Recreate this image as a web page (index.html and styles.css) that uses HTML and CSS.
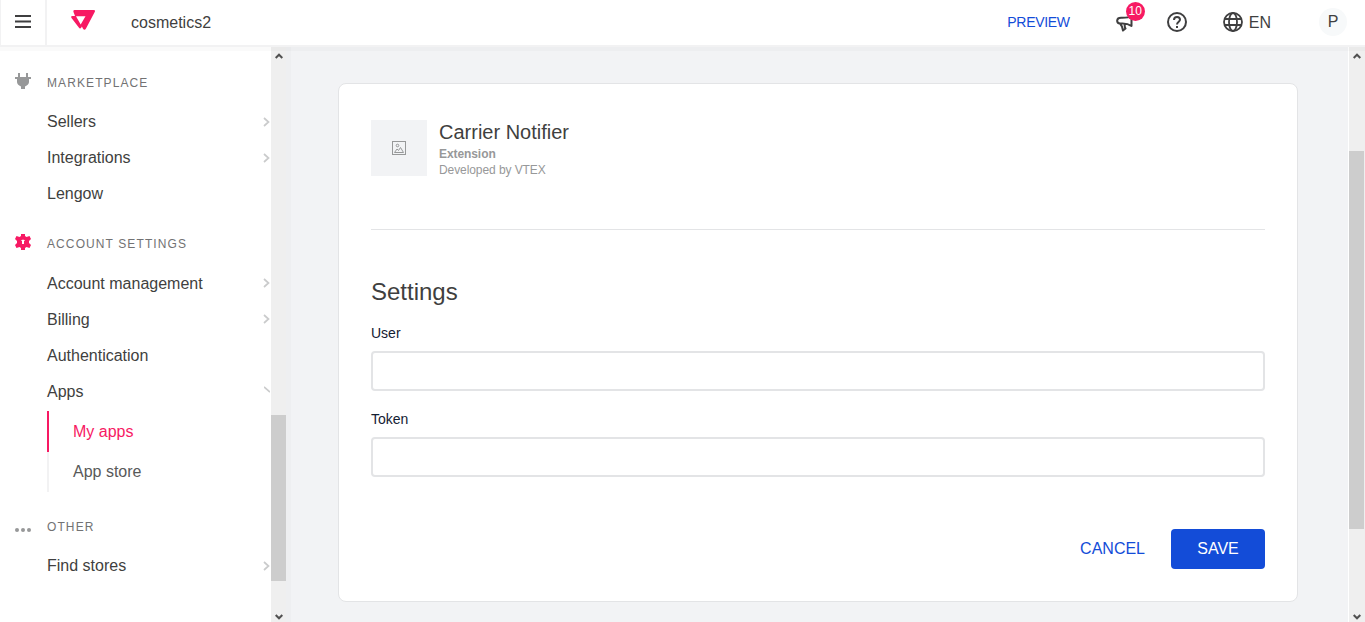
FILE: index.html
```html
<!DOCTYPE html>
<html lang="en">
<head>
<meta charset="utf-8">
<title>Carrier Notifier</title>
<link rel="stylesheet" href="styles.css">
</head>
<body>
<header class="topbar">
  <button class="menu-btn" aria-label="Menu"><svg width="16" height="13" viewBox="0 0 16 13"><path d="M0 1h16M0 6.500h16M0 12h16" stroke="#3f3f40" stroke-width="2"/></svg></button>
  <svg class="logo" width="24" height="20" viewBox="0 0 24 20"><path fill="#f71963" fill-rule="evenodd" d="M3.500 0H22.500Q24.800 0 23.700 2L15 18.600Q13.500 21 12 18.700L10.900 16.500L10.200 17.700Q9 19.300 7.800 17.500L.5 8Q-.6 6 1.500 6H4L2.500 2Q2 0 3.500 0ZM5 6.200H14.500L9.700 14.500Z"/></svg>
  <span class="account">cosmetics2</span>
  <a class="preview">PREVIEW</a>
  <div class="news">
    <svg width="19" height="19" viewBox="0 0 19 19" fill="none" stroke="#3f3f40" stroke-width="2" stroke-linejoin="round"><path d="M15.500 2C12.500 4 9 3.800 5 3.800C.2 3.800 0 8.800 4 9.500C8 9.500 11 8.800 15.500 12ZM4 9.500C6 11.500 6.500 13.500 7 16.500L9.500 14.500C8.500 13 8.500 11.500 9 10M15.500 2V12"/></svg>
    <span class="badge">10</span>
  </div>
  <svg class="help" width="20" height="20" viewBox="0 0 20 20" fill="none" stroke="#3f3f40" stroke-width="2"><circle cx="10" cy="10" r="9"/><path d="M7 8Q7 5 10 5T13 7.800C13 9.700 10 9.800 10 12.500M10 14V16"/></svg>
  <div class="lang"><svg width="20" height="20" viewBox="0 0 20 20" fill="none" stroke="#3f3f40" stroke-width="1.800"><circle cx="10" cy="10" r="9"/><ellipse cx="10" cy="10" rx="4" ry="9"/><path d="M2 7H18M2 13H18"/></svg><span>EN</span></div>
  <span class="avatar">P</span>
</header>
<div class="shell">
  <nav class="sidebar">
    <div class="nav">
      <div class="group-head"><svg width="16" height="16" viewBox="0 0 16 16"><path fill="#979899" d="M3 0H5V4H11V0H13V4H16V6H14V9Q14 11.500 10 13.500V16H6V13.500Q2 11.500 2 9V6H0V4H3Z"/></svg><span>MARKETPLACE</span></div>
      <div class="items">
        <a class="item">Sellers<svg class="chev" width="7" height="10" viewBox="0 0 7 10"><path d="M1 1L5.500 5L1 9"/></svg></a>
        <a class="item">Integrations<svg class="chev" width="7" height="10" viewBox="0 0 7 10"><path d="M1 1L5.500 5L1 9"/></svg></a>
        <a class="item">Lengow</a>
      </div>
      <div class="group-head active"><svg width="16" height="16" viewBox="0 0 16 16"><path fill="#f71963" fill-rule="evenodd" d="M6 0H10V2L11.500 3L14.500 2L16 5L14 7V9L16 11L14.500 14L11.500 13L10 14V16H6V14L4.500 13L1.500 14L0 11L2 9V7L0 5L1.500 2L4.500 3L6 2ZM6 7H7V10H9V7H10L9 5.700H7Z"/></svg><span>ACCOUNT SETTINGS</span></div>
      <div class="items raised">
        <a class="item">Account management<svg class="chev" width="7" height="10" viewBox="0 0 7 10"><path d="M1 1L5.500 5L1 9"/></svg></a>
        <a class="item">Billing<svg class="chev" width="7" height="10" viewBox="0 0 7 10"><path d="M1 1L5.500 5L1 9"/></svg></a>
        <a class="item">Authentication</a>
        <a class="item">Apps<svg class="chev down" width="6" height="7" viewBox="0 0 6 7"><path d="M0 1L6 6"/></svg></a>
        <div class="subnav"><a class="sub current">My apps</a><a class="sub">App store</a></div>
      </div>
      <div class="group-head other"><svg width="16" height="16" viewBox="0 0 16 16" fill="#979899"><circle cx="2" cy="13" r="2"/><circle cx="8" cy="13" r="2"/><circle cx="14" cy="13" r="2"/></svg><span>OTHER</span></div>
      <div class="items">
        <a class="item">Find stores<svg class="chev" width="7" height="10" viewBox="0 0 7 10"><path d="M1 1L5.500 5L1 9"/></svg></a>
      </div>
    </div>
    <div class="scrollbar"><svg class="arrow" width="8" height="6" viewBox="0 0 8 6"><path d="M.7 5L4 1.700L7.300 5"/></svg><div class="thumb side-thumb"></div><svg class="arrow" width="8" height="6" viewBox="0 0 8 6"><path d="M.7 1L4 4.300L7.300 1"/></svg></div>
  </nav>
  <main class="content">
    <section class="card">
      <div class="app">
        <div class="app-icon"><svg width="14" height="14" viewBox="0 0 14 14" fill="none" stroke="#979899"><rect x=".5" y=".5" width="13" height="13"/><circle cx="5.500" cy="4.500" r="1.300"/><path d="M2.500 11.500L5 8L6.500 9.500L8.500 6.500L11.500 11.500Z"/></svg></div>
        <div class="app-info"><h1>Carrier Notifier</h1><strong>Extension</strong><span>Developed by VTEX</span></div>
      </div>
      <h2>Settings</h2>
      <label class="field">User<input type="text"></label>
      <label class="field">Token<input type="text"></label>
      <div class="actions"><button class="cancel">CANCEL</button><button class="save">SAVE</button></div>
    </section>
  </main>
  <div class="scrollbar page-scroll"><svg class="arrow" width="8" height="6" viewBox="0 0 8 6"><path d="M.7 5L4 1.700L7.300 5"/></svg><div class="thumb page-thumb"></div><svg class="arrow" width="8" height="6" viewBox="0 0 8 6"><path d="M.7 1L4 4.300L7.300 1"/></svg></div>
  <div class="shade"></div>
</div>
</body>
</html>
```
FILE: styles.css
```css
* { box-sizing: border-box; }
body { margin: 0; height: 622px; overflow: hidden; display: flex; flex-direction: column; font-family: "Liberation Sans", Arial, sans-serif; font-size: 16px; color: #3f3f40; background: #fff; }
svg { display: block; flex: none; }
button { font: inherit; border: 0; padding: 0; background: none; }
.topbar { height: 47px; flex: none; display: flex; align-items: center; border-bottom: 2px solid #f2f2f3; padding: 0 18px 1px 0; line-height: 20px; }
.menu-btn { width: 47px; height: 45px; padding: 0 0 1px 14px; border-left: 1px solid #f2f2f3; border-right: 2px solid #f2f2f3; }
.logo { margin: 0 0 4px 24px; }
.account { margin-left: 36px; flex: 1; padding-top: 2px; }
.preview { font-size: 14px; color: #134cd8; letter-spacing: -.3px; }
.news { position: relative; margin-left: 46px; padding-top: 3px; }
.badge { position: absolute; left: 10px; top: -9px; width: 19px; height: 19px; border-radius: 50%; background: #f71963; color: #fff; font-size: 12px; line-height: 18px; text-align: center; }
.help { margin-left: 32px; }
.lang { display: flex; gap: 6px; margin-left: 36px; height: 20px; }
.lang span { padding-top: 1px; }
.avatar { width: 28px; height: 28px; border-radius: 50%; background: #f7f9fa; line-height: 28px; text-align: center; margin-left: 48px; }
.shell { position: relative; flex: 1; display: flex; min-height: 0; }
.shade { position: absolute; left: 0; right: 0; top: 0; height: 4px; background: rgba(0, 0, 0, .02); }
.sidebar { width: 291px; display: flex; background: #eeeff1; flex: none; }
.nav { width: 271px; background: #fff; padding-top: 26px; }
.group-head { display: flex; height: 20px; padding-left: 15px; gap: 16px; font-size: 12px; letter-spacing: 1.1px; line-height: 20px; color: #727273; margin-bottom: 11px; }
.group-head.active { margin: 22px 0 12px; }
.group-head.other { margin: 25px 0 11px; }
.items { display: flex; flex-direction: column; padding-left: 47px; }
.item { display: flex; align-items: center; justify-content: space-between; height: 36px; line-height: 20px; padding-right: 1px; }
.chev { fill: none; stroke: #cacbcc; stroke-width: 1.700; }
.raised .chev { margin-bottom: 2px; }
.raised .chev.down { margin: 0 0 5px; }
.subnav { margin-top: 1px; display: flex; flex-direction: column; }
.sub { height: 40px; border-left: 2px solid #f2f2f3; padding-left: 24px; line-height: 40px; color: #585959; }
.sub.current { color: #f71963; border-color: #f71963; height: 41px; line-height: 41px; }
.scrollbar { width: 15px; flex: none; background: #efefef; display: flex; flex-direction: column; justify-content: space-between; align-items: center; padding: 6px 0 2px; }
.arrow { fill: none; stroke: #505050; stroke-width: 2; }
.thumb { background: #cdcdcd; width: 15px; }
.side-thumb { height: 166px; margin: 356px 0 33px; }
.page-scroll { width: 17px; border-left: 1px solid #fff; }
.page-scroll .arrow { margin-right: 1px; }
.page-thumb { height: 378px; margin: 92px 0 85px; align-self: flex-start; }
.content { flex: 1; background: #f2f3f5; padding: 36px 50px 20px 47px; }
.card { height: 519px; background: #fff; border: 1px solid #e3e4e6; border-radius: 8px; padding: 36px 32px 32px; display: flex; flex-direction: column; }
.app { display: flex; height: 110px; gap: 12px; border-bottom: 1px solid #e3e4e6; flex: none; }
.app-icon { width: 56px; height: 56px; background: #f2f3f5; display: grid; place-items: center; }
.app-info { display: flex; flex-direction: column; font-size: 12px; line-height: 16px; color: #979899; letter-spacing: -.08px; }
h1 { font-size: 20px; font-weight: 400; line-height: 24px; letter-spacing: 0; color: #3f3f40; margin: 0 0 2px; }
h2 { font-size: 24px; font-weight: 400; line-height: 30px; margin: 47px 0 16px; }
.field { display: block; font-size: 14px; line-height: 20px; color: #142032; height: 86px; flex: none; }
.field input { display: block; width: 100%; height: 40px; margin-top: 8px; border: 2px solid #e3e4e6; border-radius: 4px; background: #fff; }
.actions { display: flex; justify-content: flex-end; gap: 26px; margin-top: 34px; }
.cancel { color: #134cd8; }
.save { width: 94px; height: 40px; border-radius: 4px; color: #fff; background: #134cd8; }
```
